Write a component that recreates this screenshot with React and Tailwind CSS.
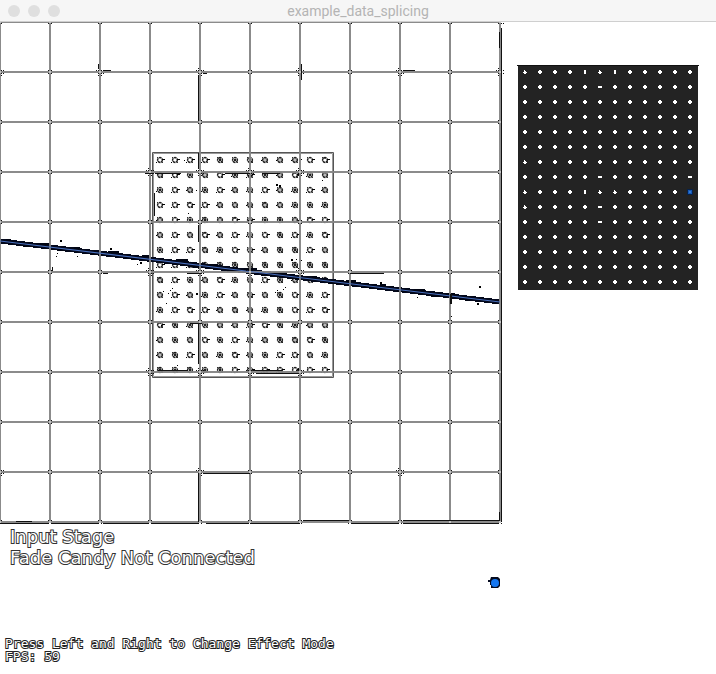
import React from "react";

const steps = Array.from({ length: 11 }, (_, i) => i * 50);
const cols = Array.from({ length: 12 }, (_, i) => i);
const rows = Array.from({ length: 15 }, (_, i) => i);
const hash = (a, b) => (a * 37 + b * 61 + a * b * 17) % 101;

/* Thin black traces beside the grid lines, as [x, y, width, height] */
const traces = [
  [98, 42, 1, 5], [103, 48, 8, 1], [198, 53, 1, 46], [203, 51, 4, 1],
  [301, 42, 1, 16], [403, 48, 12, 1], [154, 171, 1, 23], [198, 203, 1, 17],
  [198, 301, 1, 41], [256, 351, 42, 1], [350, 251, 34, 1], [187, 251, 14, 1],
  [198, 131, 1, 16], [145, 151, 8, 1], [155, 151, 26, 1], [225, 151, 25, 1],
  [262, 151, 18, 1], [190, 301, 11, 1], [198, 452, 1, 48], [204, 451, 46, 1],
  [16, 499, 16, 1], [52, 501, 47, 1], [103, 501, 46, 1], [152, 501, 46, 1],
  [206, 501, 42, 1], [250, 501, 50, 1], [303, 498, 46, 1], [352, 501, 46, 1],
  [403, 498, 96, 1], [403, 501, 96, 1], [0, 501, 48, 1], [499, 10, 1, 16],
  [501, 6, 1, 494], [499, 490, 1, 9], [158, 348, 30, 1], [450, 272, 2, 10],
  [254, 348, 28, 1], [103, 251, 5, 1], [52, 245, 1, 4],
];

/* Stray specks around the diagonal beam and inside the sample area */
const specks = [
  [60, 218, 2], [110, 226, 2], [140, 240, 2], [380, 260, 2], [57, 231, 1],
  [56, 234, 1], [24, 224, 1], [77, 234, 1], [137, 242, 1], [163, 269, 1],
  [170, 268, 1], [168, 271, 1], [171, 275, 1], [172, 266, 1], [184, 138, 1],
  [188, 191, 1], [196, 168, 1], [196, 271, 2], [161, 303, 1], [166, 281, 1],
  [275, 270, 1], [277, 268, 1], [283, 267, 1], [285, 265, 1], [276, 162, 2],
  [279, 163, 2], [301, 137, 1], [324, 182, 1], [322, 158, 1],
  [296, 237, 1], [291, 237, 2], [451, 294, 1], [417, 275, 1], [477, 281, 2],
  [479, 264, 2], [501, 1, 1], [503, 1, 1], [301, 238, 1], [177, 343, 1],
];

function Samples() {
  return cols.map((c) =>
    rows.map((r) => {
      const h = hash(c + 1, r + 2);
      const x = 160 + c * 15;
      const y = 138 + r * 15;
      return (
        <g key={`${c}-${r}`}>
          <circle cx={x} cy={y} r="2.4" fill={h % 3 === 0 ? "#bbb" : "#fff"} stroke="#222" strokeWidth="1.5" strokeDasharray="2.6 0.4" />
          <path d={`M${x - 3} ${y - 3}h1v1h-1zM${x + 2} ${y + 2}h1v1h-1z`} fill="#333" />
          {h % 2 === 0 && <rect x={x - 4} y={y + (h % 3)} width="1" height="1" />}
          {h % 4 === 1 && <path d={`M${x - 2} ${y - 2}h3M${x + 1} ${y + 2}h2`} stroke="#111" />}
          {h % 3 === 2 && <rect x={x + 2} y={y - 1} width="3" height="1" />}
          {h % 3 === 1 && <rect x={x - 1} y={y - 1} width="2" height="2" fill="#222" />}
        </g>
      );
    })
  );
}

function Beam() {
  return (
    <g>
      <path d="M0 219 500 280" stroke="#03081b" strokeWidth="5" shapeRendering="crispEdges" />
      <g shapeRendering="crispEdges">
        {Array.from({ length: 28 }, (_, i) => {
          const x = 6 + i * 17;
          const y = 219 + Math.round(x * 0.122);
          return <rect key={i} x={x} y={y + (i % 2 ? 1 : -3)} width={5 + ((i * 7) % 9)} height="2" fill="#000412" />;
        })}
      </g>
    </g>
  );
}

function InputCanvas() {
  return (
    <svg className="block shrink-0" width="504" height="502" viewBox="0 0 504 502" role="img" aria-label="Input grid">
      <path d="M152.5 130.5h181v225h-181z" fill="none" stroke="#555" />
      <path d="M153.5 131.5h179v223h-179z" fill="none" stroke="#999" />
      <Samples />
      <Beam />
      <g stroke="#858585" strokeWidth="2" opacity="0.95" shapeRendering="crispEdges">
        {steps.map((p) => (
          <path key={p} d={`M${p} 0V501M0 ${p}H501`} />
        ))}
      </g>
      <path d="M0 219 500 280" stroke="#4a70bd" strokeWidth="1.2" />
      <g shapeRendering="crispEdges">
        {traces.map(([x, y, w, h], i) => (
          <rect key={i} x={x} y={y} width={w} height={h} fill="#111" />
        ))}
        {specks.map(([x, y, s], i) => (
          <rect key={i} x={x} y={y} width={s} height={s} />
        ))}
        {steps.map((x) =>
          steps.map((y) => {
            const busy = (x % 100 === 0 && y === 50) || (x > 100 && x < 350 && y % 100 === 50 && y > 100 && y < 400) || (y === 450 && x % 200 === 0);
            return (
              <g key={`${x}-${y}`}>
                <path d={`M${x - 2} ${y - 2}h1v1h-1zM${x + 1} ${y - 2}h1v1h-1zM${x - 2} ${y + 1}h1v1h-1zM${x + 1} ${y + 1}h1v1h-1z`} fill="#111" />
                <rect x={x - 1} y={y - 1} width="2" height="2" fill="#c4c4c4" />
                {busy && (
                  <path d={`M${x - 4} ${y - 2}h1v1h-1zM${x + 3} ${y - 2}h1v1h-1zM${x - 2} ${y - 4}h1v1h-1zM${x + 1} ${y + 3}h1v1h-1zM${x - 2} ${y + 3}h1v1h-1zM${x + 3} ${y + 1}h1v1h-1z`} fill="#111" />
                )}
              </g>
            );
          })
        )}
      </g>
    </svg>
  );
}

const vertical = ["4-0", "6-0", "4-8"];
const flat = ["5-7", "5-9", "11-7", "5-1", "5-10"];
const small = ["0-0", "0-6", "0-8", "0-9", "5-0", "5-8", "6-8"];

function LedPreview() {
  return (
    <svg className="block shrink-0" width="182" height="225" viewBox="0 0 182 225" role="img" aria-label="LED output" shapeRendering="crispEdges">
      <rect x="1" width="180" height="225" fill="#232323" />
      <path d="M0 .5h182" stroke="#111" />
      {cols.map((c) =>
        rows.map((r) => {
          const key = `${c}-${r}`;
          const x = 6 + c * 15;
          const y = 5 + r * 15;
          if (key === "11-8") {
            return (
              <g key={key}>
                <rect x={x - 1} y={y - 1} width="6" height="6" fill="#082248" />
                <rect x={x} y={y} width="4" height="4" fill="#1659b7" />
                <rect x={x + 1} y={y + 1} width="2" height="2" fill="#3478d0" />
              </g>
            );
          }
          if (vertical.includes(key)) return <rect key={key} x={x + 1} y={y} width="2" height="4" fill="#fff" />;
          if (flat.includes(key)) return <rect key={key} x={x} y={y + 1} width="4" height="2" fill="#fff" />;
          if (small.includes(key)) return <path key={key} d={`M${x + 1} ${y}h1v1h1v1h1v1h-1v1h-2v-1h-1v-1h1z`} fill="#fff" />;
          return (
            <g key={key} fill="#fff">
              <rect x={x + 1} y={y} width="2" height="4" />
              <rect x={x} y={y + 1} width="4" height="2" />
            </g>
          );
        })
      )}
    </svg>
  );
}

export default function App() {
  return (
    <div className="min-h-screen bg-white">
      <header className="flex h-[22px] items-center border-b border-[#cfcfcf] bg-[#f6f6f6] px-2">
        <div className="flex gap-2">
          <button aria-label="Close" className="size-3 rounded-full bg-[#dfdfdf]" />
          <button aria-label="Minimize" className="size-3 rounded-full bg-[#dfdfdf]" />
          <button aria-label="Zoom" className="size-3 rounded-full bg-[#dfdfdf]" />
        </div>
        <h1 className="flex-1 pr-[52px] text-center font-['Roboto',sans-serif] text-[14px] leading-5 text-[#b4b4b4]">
          example_data_splicing
        </h1>
      </header>
      <main className="flex items-start gap-[13px]">
        <section>
          <InputCanvas />
          <div className="px-[10px] pt-[2px] font-['DejaVu_Sans',sans-serif] text-[18px] leading-[21px] text-white [-webkit-text-stroke:2px_#333] [paint-order:stroke_fill]">
            <p>Input Stage</p>
            <p>Fade Candy Not Connected</p>
          </div>
          <div className="flex justify-end pt-[8px] pr-[3px]">
            <svg width="13" height="13" viewBox="0 0 13 13" aria-label="Pointer">
              <path d="M3 1h7l2 2v7l-2 2H3V9H2V6H0V4h2z" fill="#050b20" />
              <circle cx="7" cy="7" r="4" fill="#1677f0" />
            </svg>
          </div>
        </section>
        <aside className="pt-[43px]">
          <LedPreview />
        </aside>
      </main>
      <footer className="px-[5px] pt-[48px] font-['DejaVu_Sans_Mono',monospace] text-[13px] leading-[13px] text-white [-webkit-text-stroke:2px_#222] [paint-order:stroke_fill]">
        <p>Press Left and Right to Change Effect Mode</p>
        <p>FPS: 59</p>
      </footer>
    </div>
  );
}
